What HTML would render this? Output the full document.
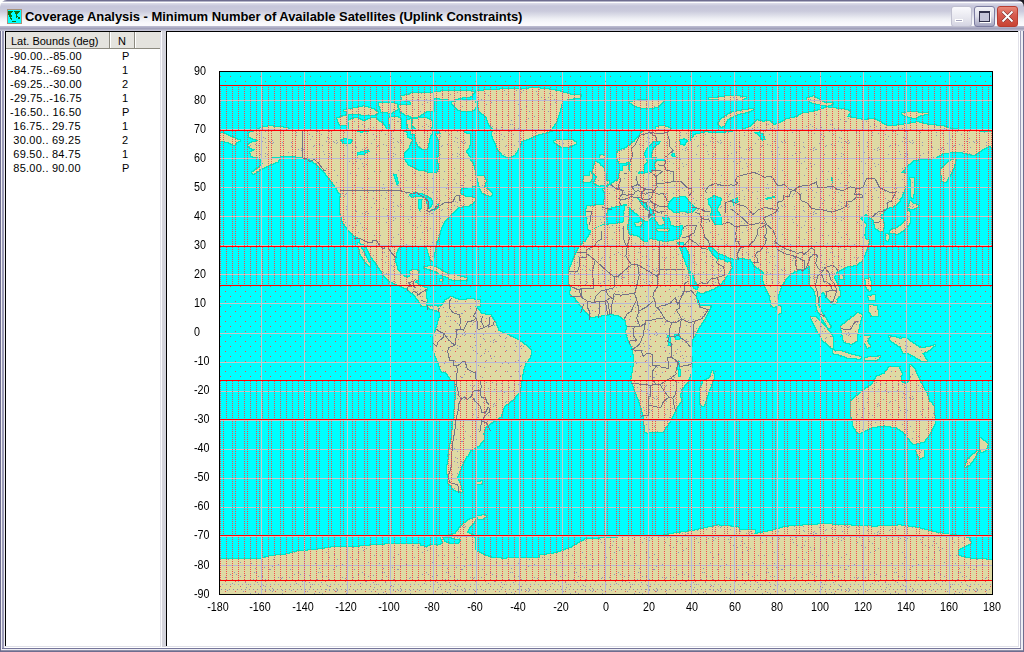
<!DOCTYPE html>
<html><head><meta charset="utf-8">
<style>
html,body{margin:0;padding:0;width:1024px;height:652px;overflow:hidden;background:#fff;}
body{position:relative;font-family:"Liberation Sans",sans-serif;}
.a{position:absolute;}
#title{position:absolute;left:0;top:0;width:1024px;height:31px;border-radius:7px 7px 0 0;
 background:linear-gradient(to bottom,#6e6d8f 0,#6e6d8f 1px,#b4b4c8 1px,#b4b4c8 2px,#fdfdfe 2px,#fdfdfe 3px,#dedeea 3px,#c6c6da 6px,#cacadc 11px,#dcdde8 15px,#eff0f5 19px,#f9f9fc 23px,#fbfbfd 26px,#c0c0d4 26px,#a8a8c0 28px,#9a9ab4 29px,#c4c4d6 30px,#c4c4d6 31px);}
#ttext{position:absolute;left:25px;top:9px;font-weight:bold;font-size:13px;line-height:16px;color:#000;white-space:nowrap;letter-spacing:-0.05px;}
#lp{position:absolute;left:6px;top:32px;width:154px;height:614px;background:#fff;}
#hdr{position:absolute;left:6px;top:32px;width:154px;height:16px;background:#e4e3de;border-bottom:1px solid #8c8a80;}
.h{position:absolute;top:2px;height:15px;font-size:11px;line-height:15px;color:#000;}
.r{position:absolute;left:6px;height:14px;font-size:11px;line-height:14px;color:#000;white-space:nowrap;letter-spacing:0.25px;}
.c1{position:absolute;left:4px;}
.c2{position:absolute;left:116px;}
.yl{position:absolute;left:193.5px;width:58px;text-align:left;font-size:12.5px;line-height:14px;color:#000;transform:scaleX(0.86);transform-origin:0 50%;}
.xl{position:absolute;top:600px;width:40px;text-align:center;font-size:12.5px;line-height:14px;color:#000;transform:scaleX(0.86);}
#map{position:absolute;left:219px;top:71px;}
#map{--land:#dedaa4;--sea:#00ffff;}
.land{fill:var(--land);}
.sea{fill:var(--sea);}
.btn{position:absolute;top:6px;width:19px;height:19px;border-radius:3px;}
</style></head><body>
<div class="a" style="left:0;top:0;width:1024px;height:652px;background:#6e6d8f"></div>
<div class="a" style="left:1px;top:31px;width:1022px;height:620px;background:#eeeef4"></div>
<div class="a" style="left:2px;top:31px;width:2px;height:617px;background:#9c9cb8"></div>
<div class="a" style="left:1020px;top:31px;width:1px;height:617px;background:#9c9cb8"></div>
<div class="a" style="left:2px;top:648px;width:1019px;height:1px;background:#76769a"></div>
<div class="a" style="left:1px;top:650px;width:1022px;height:1px;background:#9090a8"></div>
<div class="a" style="left:0;top:0;width:8px;height:8px;background:#fff"></div>
<div class="a" style="left:1016px;top:0;width:8px;height:8px;background:#1a1a22"></div>
<div id="title"></div>
<div class="a" style="left:7px;top:9px;width:13px;height:13px;background:#00ffff;border:1px solid #a89078"></div>
<svg class="a" style="left:8px;top:10px" width="13" height="13" viewBox="0 0 13 13" shape-rendering="crispEdges"><path d="M0,1h5v1h-1v1h-1v2h1v2h-1v1h1v2h-1v-1h-1v-2h-1v-2h-1z M6,1h6v1h-1v1h-1v1h-1v2h1v1h-1v1h-1v-4h-1v-2h-1z M10,7h2v2h-2z M4,11h4v1h-4z" fill="#107010"/></svg>
<div id="ttext">Coverage Analysis - Minimum Number of Available Satellites (Uplink Constraints)</div>
<div class="btn" style="left:951px;background:linear-gradient(#fafafd,#e6e6ee 60%,#d4d4e2);border:1px solid #c0c0d0"></div>
<div class="a" style="left:955px;top:19px;width:8px;height:3px;background:#a4a4bc;border:0 solid #fff;box-shadow:0 0 0 1px #fff inset"></div>
<div class="btn" style="left:974px;background:linear-gradient(#f4f4f8,#dcdce8 50%,#a4a4c0);border:1px solid #7c7ca0"></div>
<div class="a" style="left:979px;top:11px;width:9px;height:8px;border:1px solid #30304a;border-top-width:2px;background:#c4c4d8;box-shadow:1px 1px 0 #fff"></div>
<div class="btn" style="left:997px;background:linear-gradient(#e88878,#d85c50 40%,#c84434);border:1px solid #b83c30"></div>
<svg class="a" style="left:1001px;top:10px" width="13" height="13" viewBox="0 0 13 13"><path d="M1.5,1.5L11.5,11.5M11.5,1.5L1.5,11.5" stroke="#602020" stroke-width="3"/><path d="M1.5,1.5L11.5,11.5M11.5,1.5L1.5,11.5" stroke="#fff" stroke-width="2"/></svg>
<div class="a" style="left:5px;top:31px;width:1014px;height:616px;background:#e0e0e8"></div>
<div class="a" style="left:5px;top:31px;width:1013px;height:615px;background:#000"></div>
<div id="lp"></div>
<div id="hdr"><div class="h" style="left:5px">Lat. Bounds (deg)</div><div class="h" style="left:112px">N</div>
<div class="a" style="left:103px;top:0;width:1px;height:16px;background:#8c8a80"></div><div class="a" style="left:104px;top:0;width:1px;height:16px;background:#fff"></div>
<div class="a" style="left:128px;top:0;width:1px;height:16px;background:#8c8a80"></div><div class="a" style="left:129px;top:0;width:1px;height:16px;background:#fff"></div>
</div>
<div class="a" style="left:160px;top:32px;width:1px;height:614px;background:#e0e0e8"></div>
<div class="a" style="left:161px;top:31px;width:5px;height:616px;background:#d4d4dc"></div>
<div class="a" style="left:161px;top:31px;width:1px;height:616px;background:#fafafc"></div>
<div class="a" style="left:167px;top:32px;width:851px;height:614px;background:#fff"></div>
<div class="a" style="left:6px;top:646px;width:155px;height:1px;background:#e0e0e8"></div>
<div class="a" style="left:167px;top:646px;width:852px;height:1px;background:#e0e0e8"></div>
<div class="a" style="left:1018px;top:32px;width:1px;height:615px;background:#e0e0e8"></div>
<div class="a" style="left:1019px;top:31px;width:1px;height:617px;background:#fff"></div>
<div class="a" style="left:5px;top:647px;width:1015px;height:1px;background:#fff"></div>
<div class="r" style="top:49px"><span class="c1">-90.00..-85.00</span><span class="c2">P</span></div>
<div class="r" style="top:63px"><span class="c1">-84.75..-69.50</span><span class="c2">1</span></div>
<div class="r" style="top:77px"><span class="c1">-69.25..-30.00</span><span class="c2">2</span></div>
<div class="r" style="top:91px"><span class="c1">-29.75..-16.75</span><span class="c2">1</span></div>
<div class="r" style="top:105px"><span class="c1">-16.50..&nbsp;16.50</span><span class="c2">P</span></div>
<div class="r" style="top:119px"><span class="c1">&nbsp;16.75..&nbsp;29.75</span><span class="c2">1</span></div>
<div class="r" style="top:133px"><span class="c1">&nbsp;30.00..&nbsp;69.25</span><span class="c2">2</span></div>
<div class="r" style="top:147px"><span class="c1">&nbsp;69.50..&nbsp;84.75</span><span class="c2">1</span></div>
<div class="r" style="top:161px"><span class="c1">&nbsp;85.00..&nbsp;90.00</span><span class="c2">P</span></div>

<div class="yl" style="top:64.0px">90</div>
<div class="yl" style="top:93.0px">80</div>
<div class="yl" style="top:122.1px">70</div>
<div class="yl" style="top:151.1px">60</div>
<div class="yl" style="top:180.1px">50</div>
<div class="yl" style="top:209.1px">40</div>
<div class="yl" style="top:238.2px">30</div>
<div class="yl" style="top:267.2px">20</div>
<div class="yl" style="top:296.2px">10</div>
<div class="yl" style="top:325.2px">0</div>
<div class="yl" style="top:354.3px">-10</div>
<div class="yl" style="top:383.3px">-20</div>
<div class="yl" style="top:412.3px">-30</div>
<div class="yl" style="top:441.4px">-40</div>
<div class="yl" style="top:470.4px">-50</div>
<div class="yl" style="top:499.4px">-60</div>
<div class="yl" style="top:528.4px">-70</div>
<div class="yl" style="top:557.5px">-80</div>
<div class="yl" style="top:586.5px">-90</div>

<div class="xl" style="left:197.5px">-180</div>
<div class="xl" style="left:240.4px">-160</div>
<div class="xl" style="left:283.3px">-140</div>
<div class="xl" style="left:326.2px">-120</div>
<div class="xl" style="left:369.2px">-100</div>
<div class="xl" style="left:412.1px">-80</div>
<div class="xl" style="left:455.0px">-60</div>
<div class="xl" style="left:497.9px">-40</div>
<div class="xl" style="left:540.8px">-20</div>
<div class="xl" style="left:585.8px">0</div>
<div class="xl" style="left:628.7px">20</div>
<div class="xl" style="left:671.6px">40</div>
<div class="xl" style="left:714.5px">60</div>
<div class="xl" style="left:757.4px">80</div>
<div class="xl" style="left:800.3px">100</div>
<div class="xl" style="left:843.2px">120</div>
<div class="xl" style="left:886.2px">140</div>
<div class="xl" style="left:929.1px">160</div>
<div class="xl" style="left:972.0px">180</div>

<svg id="map" width="774" height="524" viewBox="219 71 774 524" shape-rendering="crispEdges">
<defs>
<pattern id="p1" patternUnits="userSpaceOnUse" x="220" y="0" width="6" height="2"><rect x="0" y="1" width="1" height="1" fill="#f84848"/></pattern>
<pattern id="p2" patternUnits="userSpaceOnUse" x="220" y="0" width="12" height="2"><rect x="0" y="1" width="1" height="1" fill="#f84848"/><rect x="3" y="1" width="1" height="1" fill="#f84848"/></pattern>
<pattern id="pP" patternUnits="userSpaceOnUse" x="220" y="0" width="10" height="10"><rect x="0" y="6" width="1" height="1" fill="#f84848"/><rect x="5" y="1" width="1" height="1" fill="#f84848"/></pattern>
<pattern id="psouth" patternUnits="userSpaceOnUse" x="218" y="0" width="4" height="10"><rect x="0" y="4" width="1" height="1" fill="#a0a0c4"/><rect x="3" y="9" width="1" height="1" fill="#8c8cac"/></pattern>
<pattern id="pdots" patternUnits="userSpaceOnUse" x="219" y="71" width="64" height="64"><path d="M41,19h1v1h-1zM50,6h1v1h-1zM9,12h1v1h-1zM46,7h1v1h-1zM27,4h1v1h-1zM11,55h1v1h-1zM53,8h1v1h-1zM30,11h1v1h-1zM54,7h1v1h-1zM15,28h1v1h-1zM7,50h1v1h-1zM6,28h1v1h-1zM5,17h1v1h-1zM37,53h1v1h-1zM18,15h1v1h-1zM39,23h1v1h-1zM13,24h1v1h-1zM47,12h1v1h-1zM8,7h1v1h-1zM26,63h1v1h-1zM54,40h1v1h-1zM59,58h1v1h-1zM46,38h1v1h-1zM31,23h1v1h-1zM31,10h1v1h-1zM38,63h1v1h-1zM43,57h1v1h-1zM36,9h1v1h-1zM15,53h1v1h-1zM21,43h1v1h-1zM19,62h1v1h-1zM53,5h1v1h-1zM9,40h1v1h-1zM43,44h1v1h-1zM63,58h1v1h-1zM8,11h1v1h-1zM34,60h1v1h-1zM8,7h1v1h-1zM39,57h1v1h-1zM36,49h1v1h-1zM44,2h1v1h-1zM59,45h1v1h-1zM21,14h1v1h-1zM63,7h1v1h-1zM27,36h1v1h-1zM16,31h1v1h-1zM50,50h1v1h-1zM63,10h1v1h-1zM21,57h1v1h-1zM51,35h1v1h-1zM17,55h1v1h-1zM35,53h1v1h-1zM45,48h1v1h-1zM29,19h1v1h-1zM10,22h1v1h-1zM19,29h1v1h-1zM29,1h1v1h-1zM62,23h1v1h-1zM33,36h1v1h-1zM0,18h1v1h-1zM53,47h1v1h-1zM40,16h1v1h-1zM6,58h1v1h-1zM50,50h1v1h-1zM51,50h1v1h-1zM13,61h1v1h-1zM51,7h1v1h-1zM24,8h1v1h-1zM26,56h1v1h-1zM20,14h1v1h-1zM43,6h1v1h-1zM13,0h1v1h-1zM19,12h1v1h-1zM46,3h1v1h-1zM9,26h1v1h-1zM48,19h1v1h-1zM32,44h1v1h-1zM46,60h1v1h-1zM15,14h1v1h-1zM62,59h1v1h-1zM61,61h1v1h-1zM39,10h1v1h-1zM18,13h1v1h-1zM43,33h1v1h-1zM61,20h1v1h-1zM2,26h1v1h-1zM46,18h1v1h-1zM3,38h1v1h-1zM11,33h1v1h-1zM46,21h1v1h-1z" fill="#9494b4"/><path d="M45,28h1v1h-1zM42,28h1v1h-1zM24,30h1v1h-1zM51,29h1v1h-1zM25,63h1v1h-1zM45,3h1v1h-1zM3,35h1v1h-1zM60,33h1v1h-1zM24,44h1v1h-1zM57,44h1v1h-1zM46,10h1v1h-1zM28,13h1v1h-1zM29,60h1v1h-1zM25,43h1v1h-1zM26,61h1v1h-1zM0,61h1v1h-1zM44,10h1v1h-1zM15,49h1v1h-1zM25,61h1v1h-1zM22,55h1v1h-1z" fill="#f0c0b0"/></pattern>
<filter id="coastf" filterUnits="userSpaceOnUse" x="219" y="71" width="774" height="524" color-interpolation-filters="sRGB">
<feColorMatrix type="luminanceToAlpha" in="SourceGraphic" result="a"/>
<feMorphology operator="dilate" radius="1" in="a" result="d"/>
<feComposite operator="out" in="d" in2="a" result="ring"/>
<feFlood flood-color="#00d6a0" result="c"/>
<feComposite operator="in" in="c" in2="ring"/>
</filter>
<mask id="lmask" maskUnits="userSpaceOnUse" x="219" y="71" width="774" height="524"><use href="#landg" style="--land:#fff;--sea:#000"/></mask>
</defs>
<g id="landg">
<rect class="sea" x="219" y="71" width="774" height="524"/>
<defs><clipPath id="c_A"><rect x="219" y="71" width="256" height="163"/></clipPath><clipPath id="c_B"><rect x="475" y="71" width="262" height="163"/></clipPath><clipPath id="c_C"><rect x="737" y="71" width="256" height="163"/></clipPath><clipPath id="c_D"><rect x="219" y="234" width="256" height="163"/></clipPath><clipPath id="c_E"><rect x="475" y="234" width="262" height="163"/></clipPath><clipPath id="c_F"><rect x="737" y="234" width="256" height="163"/></clipPath><clipPath id="c_G2"><rect x="347" y="380" width="256" height="163"/></clipPath><clipPath id="c_H2"><rect x="560" y="380" width="256" height="163"/></clipPath><clipPath id="c_AU"><rect x="780" y="340" width="213" height="135"/></clipPath><clipPath id="c_ANT1"><rect x="219" y="520" width="260" height="74"/></clipPath><clipPath id="c_ANT2"><rect x="479" y="500" width="260" height="94"/></clipPath><clipPath id="c_ANT3"><rect x="735" y="500" width="260" height="94"/></clipPath><clipPath id="c_R11"><rect x="219" y="71" width="160" height="102"/></clipPath><clipPath id="c_R12"><rect x="379" y="71" width="160" height="102"/></clipPath><clipPath id="c_HB"><rect x="379" y="120" width="120" height="76"/></clipPath><clipPath id="c_US"><rect x="299" y="173" width="160" height="102"/></clipPath><clipPath id="c_NATL"><rect x="439" y="140" width="160" height="102"/></clipPath><clipPath id="c_SCAN"><rect x="539" y="71" width="160" height="102"/></clipPath><clipPath id="c_eu"><rect x="580" y="120" width="160" height="102"/></clipPath><clipPath id="c_SIB1"><rect x="690" y="80" width="160" height="102"/></clipPath><clipPath id="c_BALT"><rect x="600" y="130" width="80" height="51"/></clipPath><clipPath id="c_SIB2"><rect x="833" y="80" width="160" height="102"/></clipPath><clipPath id="c_ME"><rect x="680" y="173" width="160" height="102"/></clipPath><clipPath id="c_med2"><rect x="580" y="190" width="120" height="60"/></clipPath><clipPath id="c_JP"><rect x="833" y="173" width="160" height="102"/></clipPath><clipPath id="c_SEA"><rect x="737" y="240" width="160" height="102"/></clipPath><clipPath id="c_NG"><rect x="833" y="300" width="160" height="102"/></clipPath><clipPath id="c_AFN"><rect x="560" y="242" width="160" height="102"/></clipPath><clipPath id="c_AFS"><rect x="600" y="330" width="160" height="102"/></clipPath><clipPath id="c_SAN"><rect x="400" y="270" width="160" height="102"/></clipPath><clipPath id="c_GRS"><rect x="470" y="100" width="120" height="76"/></clipPath><clipPath id="c_PEN"><rect x="420" y="500" width="120" height="76"/></clipPath><clipPath id="c_ARC1"><rect x="331" y="80" width="128" height="54"/></clipPath><clipPath id="c_ARC2"><rect x="411" y="80" width="128" height="54"/></clipPath><clipPath id="c_JAP"><rect x="880" y="200" width="40" height="45"/></clipPath><clipPath id="c_AK"><rect x="219" y="111" width="128" height="82"/></clipPath><clipPath id="c_BAL2"><rect x="610" y="120" width="80" height="51"/></clipPath><clipPath id="c_CAM"><rect x="360" y="230" width="120" height="76"/></clipPath><clipPath id="c_ARB"><rect x="690" y="230" width="120" height="76"/></clipPath><clipPath id="c_SAS"><rect x="420" y="380" width="120" height="76"/></clipPath></defs>
<path clip-path="url(#c_A)" class="land" d="M261.5,129.0 269.0,126.5 281.5,126.0 291.5,127.5 301.5,130.0 339.0,130.5 349.0,133.0 359.0,132.0 369.0,131.0 379.0,133.5 391.5,131.5 404.0,131.5 406.5,138.5 404.5,146.0 404.5,166.0 416.5,169.0 427.8,172.2 433.5,184.8 437.0,168.5 442.2,164.0 440.0,157.8 435.5,152.8 437.5,147.8 450.0,149.0 457.8,155.2 466.5,159.0 476.5,161.5 476.5,236.0 344.0,236.0 342.0,221.0 340.2,203.5 338.5,191.0 332.8,184.8 327.8,177.2 324.0,169.8 320.2,163.5 314.0,159.0 305.2,157.2 294.0,157.2 285.2,157.2 276.0,161.0 264.0,168.5 252.8,174.0 262.8,166.0 267.8,161.0 261.5,157.2 251.5,153.5 249.0,146.0 254.0,143.5 248.5,139.8 250.2,134.8 256.5,132.2Z"/>
<path clip-path="url(#c_A)" class="sea" d="M404.5,145.5 404.5,166.0 416.5,169.0 427.8,172.2 433.5,184.8 437.0,168.5 442.2,164.0 440.0,157.8 435.5,152.8 437.5,147.8 450.0,149.0 457.8,155.2 466.5,159.0 476.5,161.5 476.5,151.0 456.5,150.5 439.0,146.0 434.0,136.0 429.0,130.5 419.0,131.0 411.5,133.5 407.0,139.8ZM336.5,138.5 344.0,136.5 354.0,138.0 351.5,143.5 344.0,142.2 338.5,144.0ZM354.0,150.5 364.0,149.8 371.5,151.5 366.5,154.8 356.5,154.8ZM394.0,173.5 397.8,174.8 399.0,183.5 395.2,182.2ZM406.5,190.5 416.5,188.5 426.5,190.5 424.0,196.0 414.0,197.2 407.8,196.0ZM419.0,197.2 422.8,198.5 424.0,211.0 420.2,209.8ZM426.5,196.0 431.5,197.2 434.0,206.0 429.0,207.2ZM434.0,206.0 444.0,203.5 445.2,207.2 436.5,211.0Z"/>
<path clip-path="url(#c_A)" class="land" d="M414.0,118.5 429.0,116.0 444.0,118.5 459.0,123.5 476.5,126.0 476.5,150.5 456.5,150.5 444.0,148.5 436.5,143.5 431.5,136.0 419.0,131.0ZM336.5,122.2 341.5,116.0 351.5,116.0 354.0,123.5 351.5,129.0 339.0,129.0ZM355.2,119.8 369.0,116.0 381.5,117.2 391.5,118.5 394.0,129.8 355.2,129.8ZM349.0,111.0 359.0,107.2 374.0,108.5 379.0,114.8 369.0,115.5 351.5,115.5ZM376.5,108.5 394.0,102.2 409.0,103.5 404.0,113.5 389.0,114.8 379.0,114.0ZM399.0,96.0 419.0,92.2 444.0,92.2 476.5,93.0 476.5,108.5 456.5,106.0 439.0,108.5 419.0,106.0 406.5,103.5ZM409.0,116.0 424.0,113.5 436.5,116.0 434.0,122.2 414.0,123.5ZM394.0,119.8 409.0,119.8 411.5,129.8 394.0,129.8ZM219.0,132.2 229.0,134.8 239.0,138.5 234.0,143.5 224.0,142.2 219.0,141.0Z"/>
<path clip-path="url(#c_B)" class="land" d="M467.5,93.5 485.0,91.0 505.0,89.8 525.0,89.0 550.0,89.8 560.0,92.2 580.0,94.8 575.0,98.5 562.5,98.5 565.0,111.0 560.0,121.0 555.0,128.5 540.0,133.5 525.0,138.5 515.0,153.5 512.5,157.2 507.5,156.0 497.5,143.5 490.0,133.5 492.5,129.8 485.0,123.5 477.5,116.0 467.5,108.5ZM618.8,157.2 625.0,148.5 632.5,142.2 640.0,133.5 650.0,130.5 665.0,129.0 675.0,132.2 687.5,134.8 700.0,133.5 740.0,131.0 740.0,236.0 592.5,236.0 588.8,226.0 587.5,211.0 595.0,207.2 607.5,206.0 605.0,196.0 600.0,191.0 610.0,188.5 617.5,181.0 625.0,178.5 630.0,172.2 625.0,166.0 622.5,161.0ZM472.5,168.5 480.0,171.0 485.0,178.5 482.5,186.0 472.5,188.5Z"/>
<path clip-path="url(#c_B)" class="sea" d="M680.0,136.0 695.0,137.2 692.5,146.0 682.5,143.5ZM627.5,176.0 635.0,171.0 642.5,163.5 647.5,153.5 650.0,143.5 657.5,141.0 655.0,156.0 667.5,157.2 655.0,161.0 650.0,171.0 645.0,178.5 635.0,181.0ZM667.5,201.0 680.0,197.2 690.0,198.5 695.0,206.0 685.0,211.0 672.5,209.8ZM705.0,198.5 715.0,196.0 725.0,201.0 720.0,216.0 725.0,231.0 712.5,236.0 707.5,221.0Z"/>
<path clip-path="url(#c_B)" class="land" d="M553.8,142.2 560.0,138.5 570.0,139.0 577.5,142.2 573.8,146.0 562.5,147.2 555.0,146.0ZM630.0,102.2 640.0,99.8 650.0,102.2 660.0,103.5 655.0,108.5 640.0,108.5ZM705.0,96.0 720.0,94.8 732.5,96.0 732.5,101.0 712.5,101.0ZM717.5,121.0 732.5,114.8 732.5,129.8 722.5,129.8ZM482.5,188.5 490.0,187.2 493.8,196.0 485.0,196.0ZM592.5,164.8 597.5,162.2 602.5,171.0 607.5,181.0 602.5,186.0 595.0,184.8 590.0,176.0ZM585.0,173.5 592.5,172.2 592.5,181.0 586.2,182.2Z"/>
<path clip-path="url(#c_C)" class="land" d="M734.5,129.0 752.0,122.2 762.0,124.8 777.0,123.5 787.0,117.2 797.0,113.5 812.0,111.0 822.0,108.5 847.0,111.0 852.0,119.8 867.0,119.8 877.0,121.0 892.0,124.8 907.0,123.5 922.0,123.5 937.0,124.8 949.5,127.2 962.0,131.0 977.0,133.5 987.0,138.5 994.5,142.2 994.5,151.0 977.0,153.5 962.0,154.8 957.0,161.0 954.5,171.0 942.0,183.5 938.2,171.0 943.2,161.0 934.5,158.5 917.0,158.5 909.5,168.5 899.5,173.5 900.8,188.5 894.5,196.0 887.0,211.0 879.5,218.5 887.0,231.0 887.0,236.0 877.0,236.0 872.0,221.0 867.0,216.0 859.5,213.5 859.5,236.0 734.5,236.0Z"/>
<path clip-path="url(#c_C)" class="sea" d="M837.0,173.5 840.0,174.8 834.5,182.2 829.5,183.0ZM764.5,197.2 774.5,195.5 774.5,198.0 765.8,199.0Z"/>
<path clip-path="url(#c_C)" class="land" d="M909.5,176.0 914.5,174.8 917.0,191.0 914.5,208.5 910.8,207.2 912.0,191.0ZM909.5,218.5 917.0,216.0 922.0,223.5 912.0,228.5ZM897.0,234.0 912.0,228.5 909.5,236.0 897.0,236.0ZM902.0,112.2 912.0,111.0 929.5,113.5 922.0,116.0 907.0,116.0ZM804.5,98.5 814.5,96.0 822.0,103.5 812.0,104.8ZM734.5,113.5 742.0,109.8 754.5,109.8 747.0,113.5Z"/>
<path clip-path="url(#c_D)" class="land" d="M354.0,231.5 436.5,231.5 434.0,245.2 429.0,246.5 424.0,244.0 414.0,245.2 401.5,246.5 396.5,251.5 399.0,266.5 404.0,274.0 411.5,271.5 416.5,266.5 419.0,275.2 415.2,280.2 424.0,284.0 426.5,291.5 434.0,299.0 439.0,305.2 434.0,307.8 426.5,302.8 419.0,294.0 409.0,289.0 399.0,284.0 389.0,279.0 381.5,266.5 376.5,254.0 374.0,246.5 364.0,234.0ZM355.2,236.5 364.0,244.0 369.0,257.8 372.0,266.0 367.8,265.2 362.8,254.0 357.8,244.0ZM444.0,299.5 454.0,297.8 476.5,297.8 476.5,399.0 456.5,399.0 454.0,384.0 444.0,369.0 439.0,359.0 432.8,345.2 434.0,334.0 439.0,321.5 436.5,309.0Z"/>
<path clip-path="url(#c_D)" class="land" d="M424.0,266.5 434.0,265.2 444.0,271.5 454.0,276.5 449.0,277.8 436.5,272.8 426.5,270.2ZM454.0,276.5 464.0,275.2 466.5,279.0 456.5,280.2Z"/>
<path clip-path="url(#c_E)" class="land" d="M586.2,231.5 680.0,231.5 682.5,249.0 690.0,266.5 695.0,282.8 701.2,290.2 712.5,292.8 716.2,290.2 711.2,309.0 701.2,324.0 695.0,334.0 690.5,349.0 692.5,364.0 690.0,379.0 682.5,394.0 680.0,399.0 637.5,399.0 636.2,384.0 635.0,369.0 632.5,351.5 630.0,339.0 627.5,326.5 625.0,319.0 620.0,315.2 605.0,314.0 590.0,317.8 582.5,311.5 575.0,304.0 571.2,294.0 568.8,284.0 570.0,269.0 575.0,254.0 580.0,244.0ZM687.0,231.5 740.0,231.5 740.0,271.5 715.0,281.0 705.0,282.8 700.0,274.0 693.8,259.0 688.8,244.0ZM472.5,306.5 480.0,309.0 490.0,316.5 497.5,329.0 512.5,336.5 525.0,344.0 531.2,351.5 527.5,364.0 522.5,374.0 520.0,389.0 517.5,399.0 472.5,399.0Z"/>
<path clip-path="url(#c_E)" class="sea" d="M672.5,334.0 680.0,333.5 679.5,339.0 673.0,339.5Z"/>
<path clip-path="url(#c_E)" class="land" d="M705.0,376.5 712.5,374.0 715.0,384.0 710.0,399.0 700.0,399.0 701.2,386.5Z"/>
<path clip-path="url(#c_F)" class="land" d="M734.5,231.5 867.0,231.5 864.5,249.0 862.0,261.5 852.0,269.0 842.0,274.0 843.2,284.0 837.0,299.0 832.0,301.5 829.5,289.0 824.5,286.5 820.8,299.0 824.5,314.0 818.2,315.2 814.5,301.5 813.2,286.5 809.5,274.0 804.5,262.8 797.0,269.0 787.0,275.2 780.8,289.0 775.8,306.5 772.0,306.5 767.0,291.5 762.0,274.0 754.5,264.0 749.5,251.5 742.0,249.0 734.5,251.5Z"/>
<path clip-path="url(#c_F)" class="land" d="M777.0,306.5 780.8,305.2 782.0,314.0 778.2,315.2ZM839.5,274.0 844.5,272.8 844.5,277.8 839.5,277.8ZM863.2,264.0 865.8,261.5 867.0,270.2 864.0,271.5ZM809.5,316.5 814.5,317.8 824.5,326.5 834.5,344.0 832.0,349.0 822.0,339.0 814.5,329.0ZM834.5,349.0 849.5,351.5 862.0,356.5 859.5,359.0 842.0,356.5 833.2,352.8ZM842.0,321.5 849.5,316.5 859.5,314.0 862.0,321.5 857.0,331.5 854.5,341.5 844.5,341.5 839.5,334.0ZM864.5,329.0 872.0,329.0 869.5,339.0 874.5,344.0 867.0,346.5 864.5,339.0ZM864.5,289.0 872.0,291.5 874.5,304.0 877.0,316.5 872.0,317.8 867.0,309.0 865.8,299.0ZM887.0,334.0 897.0,336.5 907.0,339.0 917.0,344.0 927.0,351.5 924.5,361.5 912.0,354.0 902.0,351.5 892.0,344.0 888.2,339.0ZM862.0,356.5 882.0,354.0 882.0,357.8 862.0,359.0ZM872.0,379.0 887.0,369.0 899.5,369.0 907.0,374.0 912.0,364.0 917.0,374.0 922.0,389.0 924.5,399.0 862.0,399.0 867.0,384.0ZM882.0,234.0 897.0,231.5 892.0,241.5 885.8,241.5Z"/>
<path clip-path="url(#c_G2)" class="land" d="M453.2,377.5 523.2,377.5 519.5,390.0 509.5,400.0 502.0,412.5 492.0,422.5 487.0,430.0 483.2,440.0 477.0,445.0 472.0,451.2 467.0,455.0 462.0,465.0 457.0,477.5 460.8,486.2 462.0,492.0 454.5,490.0 448.2,482.5 447.0,467.5 449.5,455.0 452.0,440.0 454.5,420.0 457.0,395.0Z"/>
<path clip-path="url(#c_G2)" class="land" d="M452.0,535.0 464.5,527.5 474.5,520.0 487.0,516.2 477.0,525.0 472.0,535.0 477.0,545.0 452.0,545.0ZM477.0,482.5 482.0,481.2 482.0,483.8 477.5,484.5Z"/>
<path clip-path="url(#c_H2)" class="land" d="M631.2,377.5 690.0,377.5 685.0,390.0 682.5,400.0 675.0,405.0 672.5,412.5 667.5,422.5 660.0,430.0 647.5,432.5 645.0,425.0 640.0,412.5 637.5,397.5 632.5,385.0Z"/>
<path clip-path="url(#c_H2)" class="land" d="M702.5,377.5 712.5,377.5 710.0,390.0 705.0,405.0 700.0,405.0 698.8,395.0 701.2,385.0Z"/>
<path clip-path="url(#c_AU)" class="land" d="M869.4,381.6 875.7,377.4 884.0,369.1 892.3,367.0 899.6,369.1 900.6,379.5 904.8,380.6 910.0,379.5 911.0,365.0 917.3,381.6 925.6,394.1 933.9,406.6 935.0,423.2 929.8,433.6 923.5,441.9 913.1,444.0 906.9,435.7 902.7,431.5 896.5,427.4 884.0,425.3 871.5,427.4 859.0,433.6 853.8,427.4 850.7,412.8 850.7,398.2 857.0,392.0 867.4,385.8Z"/>
<path clip-path="url(#c_AU)" class="land" d="M916.2,450.2 923.5,450.2 923.5,456.5 919.4,458.6ZM979.7,437.8 988.0,444.0 985.9,450.2 980.7,452.3ZM977.6,451.3 975.5,456.5 969.3,464.8 965.1,466.9 967.2,460.6 973.4,454.4ZM892.3,340.0 904.8,340.0 913.1,346.2 923.5,358.7 925.6,360.8 917.3,360.8 904.8,356.6 898.6,350.4 894.4,346.2Z"/>
<path clip-path="url(#c_ANT1)" class="land" d="M216.5,559.4 259.6,559.4 269.8,556.1 287.6,554.3 295.2,551.7 307.9,550.5 320.6,549.2 335.8,546.7 351.0,547.4 371.3,545.4 391.7,544.1 409.4,544.1 434.8,542.9 447.5,537.8 457.7,535.2 462.8,530.2 472.9,522.5 480.5,520.0 480.5,596.2 216.5,596.2Z"/>
<path clip-path="url(#c_ANT2)" class="land" d="M471.4,515.2 481.5,516.5 479.0,552.1 504.4,557.1 529.8,557.1 555.2,553.3 570.4,548.2 585.6,539.4 606.0,538.1 631.3,536.8 656.7,536.8 677.0,533.0 694.8,530.5 717.7,525.4 732.9,526.7 740.5,527.9 740.5,601.6 471.4,601.6Z"/>
<path clip-path="url(#c_ANT3)" class="land" d="M727.4,529.2 755.3,530.0 754.0,534.3 773.1,530.5 785.8,526.7 823.9,524.1 849.3,525.4 874.6,526.7 900.0,525.4 917.8,527.9 938.1,533.0 955.9,535.5 968.6,538.1 971.1,543.2 958.4,549.5 958.4,555.9 968.6,558.4 988.9,559.7 996.5,559.7 996.5,601.6 727.4,601.6Z"/>
<rect class="sea" x="219" y="71" width="160" height="102"/>
<path clip-path="url(#c_R11)" class="land" d="M262.0,130.1 265.9,127.6 272.2,126.1 280.0,127.0 287.8,128.1 292.5,129.7 306.6,130.4 312.9,131.2 320.7,130.8 328.5,130.4 337.9,131.2 380.1,131.2 380.1,174.3 326.9,174.3 320.7,168.0 312.9,161.0 304.3,156.3 297.2,156.7 291.0,155.5 284.7,155.5 278.4,158.6 272.2,161.7 267.5,166.4 262.8,171.1 259.7,174.3 256.5,174.3 258.1,168.0 264.4,163.3 259.7,160.2 251.9,156.3 251.1,152.3 258.1,150.0 252.6,147.7 250.3,143.0 257.3,139.8 251.1,136.7 248.7,133.6 255.8,132.0ZM219.0,132.8 226.8,133.6 234.6,137.5 240.1,139.8 236.2,142.2 233.1,145.3 228.4,142.2 222.1,141.4 217.4,140.6Z"/>
<path clip-path="url(#c_R11)" class="sea" d="M337.9,139.8 344.2,138.3 353.5,139.8 350.4,144.5 342.6,143.7ZM356.7,152.3 366.1,150.0 370.7,150.8 364.5,154.7 357.5,155.5Z"/>
<path clip-path="url(#c_R11)" class="land" d="M337.9,117.9 344.2,115.6 348.8,116.4 348.8,124.2 346.5,128.9 339.5,127.3 337.1,122.6ZM352.0,119.5 359.8,116.4 369.2,114.8 380.1,113.2 380.1,129.7 359.8,129.2 352.0,126.5ZM359.8,105.4 369.2,103.9 370.7,107.8 362.9,108.5ZM369.2,109.3 380.1,107.8 380.1,112.0 372.3,112.5Z"/>
<rect class="sea" x="379" y="71" width="160" height="102"/>
<path clip-path="url(#c_R12)" class="land" d="M377.4,131.2 405.6,131.2 410.3,136.7 408.7,144.5 405.6,152.3 404.0,158.6 405.6,174.3 377.4,174.3ZM410.3,131.2 430.6,131.2 435.3,133.6 444.7,132.0 460.3,133.6 472.9,136.7 474.4,144.5 465.0,152.3 449.4,150.8 441.6,152.3 430.6,144.5 418.1,139.8ZM430.6,158.6 441.6,155.5 457.2,158.6 472.9,161.7 476.0,174.3 430.6,174.3Z"/>
<path clip-path="url(#c_R12)" class="land" d="M402.5,94.5 418.1,92.9 430.6,91.3 444.7,91.0 463.5,91.3 474.4,92.9 472.9,100.7 466.6,103.9 460.3,107.0 452.5,105.4 451.0,102.3 438.4,103.1 425.9,102.3 413.4,103.1 402.5,99.9ZM476.0,92.9 488.5,89.8 508.8,89.0 540.1,88.2 540.1,174.3 516.7,174.3 515.1,155.5 508.8,156.3 501.0,149.2 494.8,141.4 491.6,133.6 491.6,130.1 490.1,124.2 485.4,117.9 480.7,111.7 476.0,107.0 479.1,100.7ZM379.0,103.9 397.8,102.3 410.3,104.6 410.3,109.3 397.8,110.1 377.4,110.1ZM415.0,104.6 430.6,104.6 444.7,106.2 443.1,111.7 430.6,113.2 416.5,111.7ZM377.4,114.8 388.4,113.2 397.8,116.4 399.3,124.2 388.4,128.9 377.4,128.9ZM402.5,116.4 418.1,115.6 429.1,117.9 425.9,124.2 415.0,128.9 404.0,127.3ZM430.6,117.9 444.7,117.9 451.0,124.2 446.3,129.7 433.8,129.7Z"/>
<rect class="sea" x="379" y="120" width="120" height="76"/>
<path clip-path="url(#c_HB)" class="land" d="M377.8,131.7 406.0,132.3 407.1,137.6 411.8,139.9 408.3,148.1 403.6,152.8 403.6,158.7 408.3,165.7 417.7,170.4 425.9,171.6 431.7,176.2 434.1,182.1 435.8,183.3 436.4,173.9 439.9,166.9 437.6,159.8 439.9,152.8 444.6,151.1 451.7,149.9 461.0,154.6 468.1,158.7 472.8,162.2 476.3,169.2 482.1,173.9 489.2,180.9 499.7,183.3 499.7,197.3 377.8,197.3ZM377.8,118.8 387.2,118.8 387.2,129.4 377.8,130.0ZM390.7,123.5 406.0,122.3 407.1,129.4 390.7,129.4ZM411.8,118.8 432.9,118.8 431.7,128.2 413.0,129.4ZM437.6,118.8 455.2,118.8 454.0,127.0 439.9,127.0ZM484.5,118.8 499.7,118.8 499.7,125.9 486.8,125.9Z"/>
<path clip-path="url(#c_HB)" class="sea" d="M393.1,175.1 395.4,174.5 398.9,183.3 397.8,185.6Z"/>
<path clip-path="url(#c_HB)" class="land" d="M414.2,131.7 431.7,131.7 429.4,138.8 427.0,149.3 420.0,148.1 416.5,142.3ZM435.2,131.1 470.4,131.1 471.6,141.1 463.4,147.0 454.0,144.6 444.6,147.0 439.9,143.4 437.6,137.6ZM490.3,131.7 499.7,130.5 499.7,150.5 495.0,149.3 491.5,141.1Z"/>
<rect class="sea" x="299" y="173" width="160" height="102"/>
<path clip-path="url(#c_US)" class="land" d="M319.3,171.4 460.1,171.4 460.1,190.2 453.9,193.3 453.9,209.0 447.6,216.8 442.9,224.6 439.8,232.4 436.7,240.3 433.9,245.7 433.5,254.3 433.9,261.4 431.2,262.2 428.8,255.9 428.1,248.1 424.2,245.7 414.8,244.2 406.9,244.7 399.1,245.3 394.4,247.3 392.9,254.3 394.4,263.7 399.1,273.1 400.7,276.3 380.3,276.3 377.2,263.7 374.1,254.3 370.2,245.7 364.7,240.3 353.8,235.6 349.1,230.9 342.8,221.5 340.0,212.1 340.0,201.2 341.2,191.0 335.8,188.6 330.3,182.4 324.8,176.9ZM358.1,242.6 361.6,245.7 366.3,254.3 371.0,264.5 369.4,266.1 364.7,258.3 360.8,251.2 357.7,245.0Z"/>
<path clip-path="url(#c_US)" class="sea" d="M408.5,194.9 414.8,191.8 422.6,193.3 428.8,196.5 424.2,198.0 417.9,196.5 411.6,198.0ZM417.9,199.6 422.6,198.8 421.8,209.0 418.7,211.3ZM425.7,196.5 432.0,198.0 433.5,204.3 428.8,209.8 426.5,204.3ZM430.4,209.8 439.8,205.1 442.9,205.9 433.5,211.3ZM436.7,204.3 442.9,201.9 446.1,203.5 439.8,206.2ZM392.9,174.6 396.8,173.8 399.1,184.0 396.8,185.5Z"/>
<path clip-path="url(#c_US)" class="land" d="M424.2,266.1 433.5,265.3 442.9,268.4 455.4,273.1 460.1,275.0 447.6,276.3 436.7,270.8 425.7,268.7Z"/>
<rect class="sea" x="439" y="140" width="160" height="102"/>
<path clip-path="url(#c_NATL)" class="land" d="M437.4,138.4 471.9,138.4 468.7,147.8 465.6,151.0 470.3,158.8 475.0,168.2 476.5,177.5 475.8,185.4 470.3,186.9 460.9,188.5 459.3,193.2 464.0,196.3 475.0,197.9 475.0,201.0 468.7,205.7 457.8,207.3 451.5,213.5 445.3,219.8 441.3,227.6 439.0,235.4 437.4,243.3Z"/>
<path clip-path="url(#c_NATL)" class="land" d="M476.5,172.9 482.8,174.4 485.9,180.7 484.4,186.9 492.2,193.2 490.6,196.3 482.8,193.2 479.7,186.9 478.1,180.7ZM492.2,138.4 520.3,138.4 517.2,146.3 514.1,155.6 511.0,157.2 504.7,152.5 498.4,147.8ZM553.2,141.6 561.0,139.2 576.7,139.2 575.1,144.7 567.3,147.0 557.9,146.3ZM582.9,176.0 589.2,171.3 593.9,172.9 593.1,180.7 584.5,182.2ZM593.9,161.9 600.1,160.3 600.1,191.6 595.4,190.1ZM586.8,205.7 600.1,204.1 600.1,243.3 586.1,243.3 589.2,227.6 587.6,215.1Z"/>
<rect class="sea" x="539" y="71" width="160" height="102"/>
<path clip-path="url(#c_SCAN)" class="land" d="M537.4,88.2 551.5,89.8 559.3,91.3 570.3,94.5 581.2,95.2 579.7,97.6 567.2,99.2 562.5,103.9 564.0,111.7 559.3,117.9 557.8,125.8 551.5,130.4 537.4,133.6ZM623.5,174.3 617.2,160.2 617.2,152.3 626.6,144.5 636.0,135.1 642.3,131.2 651.6,130.1 657.9,127.3 664.2,126.5 670.4,128.1 679.8,130.4 692.3,133.6 700.1,136.7 700.1,174.3Z"/>
<path clip-path="url(#c_SCAN)" class="sea" d="M652.4,140.6 660.2,140.6 658.7,147.7 651.6,155.5 648.5,164.9 646.9,174.3 640.7,174.3 643.8,163.3 648.5,152.3ZM678.2,138.3 689.2,136.7 693.9,141.4 689.2,146.1 682.9,144.5ZM670.4,153.9 675.1,152.3 676.7,157.0 672.0,158.6Z"/>
<path clip-path="url(#c_SCAN)" class="land" d="M553.9,142.2 559.3,139.8 570.3,139.8 576.5,143.0 573.4,146.9 562.5,147.7 556.2,146.1ZM629.7,102.3 640.7,99.9 648.5,100.7 662.6,101.5 657.9,107.0 645.4,108.5 636.0,106.2ZM592.2,161.0 601.6,160.2 604.7,164.9 603.1,174.3 590.6,174.3 593.8,168.0Z"/>
<rect class="sea" x="580" y="120" width="160" height="102"/>
<path clip-path="url(#c_eu)" class="land" d="M620.7,163.8 616.8,153.6 623.8,148.5 630.1,143.5 636.3,135.6 642.6,131.7 653.5,129.4 667.6,129.7 741.1,129.7 741.1,223.3 586.3,223.3 586.3,205.3 603.5,204.5 603.5,195.1 597.2,192.0 605.0,188.8 611.3,184.1 617.5,180.2 623.8,177.9 625.4,171.6 626.9,167.7Z"/>
<path clip-path="url(#c_eu)" class="sea" d="M630.1,173.2 636.3,170.1 641.0,165.4 644.1,159.1 645.7,149.7 648.8,143.5 655.1,138.8 661.3,140.3 658.2,145.0 653.5,151.3 652.0,159.1 655.1,163.8 662.9,160.7 667.6,157.5 664.5,162.2 658.2,166.9 652.0,171.6 645.7,173.2 639.4,174.8 631.6,175.5ZM678.6,138.8 686.4,135.6 692.6,137.2 689.5,145.0 683.3,146.6 680.1,143.5ZM692.6,130.3 713.0,130.3 711.4,135.6 698.9,137.2ZM667.6,198.2 675.4,196.7 683.3,195.1 689.5,196.7 689.5,204.5 686.4,210.7 677.0,212.3 669.2,209.2 666.8,202.9ZM706.7,196.7 714.5,195.1 720.8,198.2 717.7,207.6 719.2,217.0 723.9,223.3 714.5,223.3 709.8,213.9 711.4,204.5Z"/>
<path clip-path="url(#c_eu)" class="land" d="M595.6,162.2 600.3,163.8 603.5,171.6 608.2,179.4 609.7,184.1 598.8,185.7 594.1,182.6 597.2,176.3 592.5,171.6ZM584.7,173.2 591.0,171.6 592.5,177.9 589.4,182.6 583.1,181.8ZM717.7,123.1 727.1,120.0 741.1,118.4 741.1,126.3 728.6,127.8Z"/>
<rect class="sea" x="690" y="80" width="160" height="102"/>
<path clip-path="url(#c_SIB1)" class="land" d="M688.4,144.1 694.7,134.8 705.6,132.4 721.3,133.2 732.2,131.6 741.6,130.1 751.0,126.9 757.3,120.4 763.5,121.9 768.2,120.4 774.5,125.4 782.3,121.9 787.0,119.1 796.4,117.2 802.6,113.6 815.2,111.3 827.7,107.4 838.6,108.9 851.1,111.3 851.1,183.3 688.4,183.3Z"/>
<path clip-path="url(#c_SIB1)" class="sea" d="M754.1,132.4 759.6,131.3 763.5,134.0 765.9,139.4 762.0,140.7 758.8,136.3Z"/>
<path clip-path="url(#c_SIB1)" class="land" d="M718.2,123.8 721.3,119.1 730.7,112.9 741.6,110.5 754.1,108.9 749.4,111.3 736.9,114.4 727.5,119.1 724.4,125.4 721.3,126.9ZM705.6,98.8 715.0,98.0 730.7,95.6 746.3,97.2 741.6,99.6 721.3,99.6ZM805.8,98.8 813.6,96.4 819.8,100.3 824.5,102.7 833.9,103.5 827.7,105.8 812.0,102.7Z"/>
<rect class="sea" x="600" y="130" width="80" height="51"/>
<path clip-path="url(#c_BALT)" class="land" d="M617.2,153.5 620.3,149.9 628.2,147.6 632.9,141.7 639.1,133.1 642.2,129.2 680.6,129.2 680.6,181.6 618.0,181.6 619.6,173.8 620.3,166.8 626.6,166.0 630.5,164.4 625.8,162.9 618.8,162.1Z"/>
<path clip-path="url(#c_BALT)" class="sea" d="M651.6,141.3 660.2,141.7 656.3,145.6 650.8,148.8 646.9,155.8 650.8,155.8 654.8,158.2 661.0,157.0 667.3,157.0 666.5,159.7 657.9,160.1 654.8,162.1 657.9,166.8 654.8,170.7 649.3,172.2 643.8,173.8 637.5,173.8 640.7,169.1 643.8,164.4 643.0,159.7 644.6,150.3 647.7,144.9Z"/>
<path clip-path="url(#c_BALT)" class="land" d="M599.2,155.0 604.7,155.8 603.9,158.9 599.2,158.9ZM599.2,165.2 603.1,166.8 605.5,173.8 606.3,178.5 604.7,181.6 599.2,181.6Z"/>
<rect class="sea" x="833" y="80" width="160" height="102"/>
<path clip-path="url(#c_SIB2)" class="land" d="M831.4,108.2 842.4,108.9 850.2,111.3 847.1,116.8 862.7,119.9 873.7,119.1 879.9,122.2 887.8,126.2 898.7,125.4 908.1,123.8 917.5,122.2 926.9,124.6 942.5,126.2 950.3,128.5 966.0,130.8 981.6,131.6 994.1,131.6 994.1,148.8 989.4,145.7 983.2,148.8 973.8,155.1 961.3,152.0 951.9,152.0 942.5,153.5 934.7,158.2 923.7,159.0 914.3,159.8 906.5,166.0 900.3,173.9 897.1,183.3 831.4,183.3Z"/>
<path clip-path="url(#c_SIB2)" class="sea" d="M833.0,175.4 839.3,173.9 837.7,180.1 833.0,182.0Z"/>
<path clip-path="url(#c_SIB2)" class="land" d="M940.9,169.2 948.8,161.3 955.8,159.0 953.5,167.6 948.8,177.0 945.6,183.3 940.9,183.3ZM900.3,112.9 914.3,112.1 928.4,113.6 920.6,115.2 914.3,118.3 906.5,116.0Z"/>
<rect class="sea" x="680" y="173" width="160" height="102"/>
<path clip-path="url(#c_ME)" class="land" d="M678.4,171.4 841.1,171.4 841.1,276.3 678.4,276.3Z"/>
<path clip-path="url(#c_ME)" class="sea" d="M707.4,198.8 714.4,194.9 722.2,198.0 720.7,204.3 717.5,209.0 722.2,216.8 722.2,224.6 714.4,224.6 709.7,216.8 711.3,209.0 708.2,204.3ZM731.6,199.6 737.9,196.5 738.7,201.9 733.2,205.9ZM678.4,196.5 686.3,195.7 694.1,207.4 689.4,212.1 678.4,212.1ZM764.5,198.0 775.4,195.7 774.6,198.0 766.0,199.9ZM678.4,224.6 683.1,226.2 682.3,235.6 678.4,235.6ZM678.4,246.5 683.1,251.2 687.8,266.9 689.4,276.3 678.4,276.3ZM709.7,248.1 714.4,249.7 720.7,255.9 726.9,259.0 731.6,263.7 726.9,266.9 719.1,262.2 712.9,255.9ZM731.6,262.2 736.3,259.0 748.8,258.3 755.1,262.2 758.2,266.9 762.9,273.1 764.5,276.3 731.6,276.3ZM792.6,270.0 803.6,266.9 805.2,276.3 792.6,276.3ZM834.9,271.6 841.1,268.4 841.1,276.3 834.9,276.3ZM830.2,177.7 841.1,174.6 841.1,182.4 832.5,183.2Z"/>
<rect class="sea" x="580" y="190" width="120" height="60"/>
<path clip-path="url(#c_med2)" class="land" d="M578.8,188.8 700.7,188.8 700.7,267.3 578.8,267.3Z"/>
<path clip-path="url(#c_med2)" class="sea" d="M578.8,188.8 603.4,188.8 605.8,194.7 603.4,205.2 587.0,205.8 585.9,213.4 588.2,228.7 591.7,231.0 587.0,239.2 583.5,247.4 578.8,248.6ZM592.9,229.8 601.1,225.7 608.1,224.6 618.7,223.4 626.9,223.4 626.9,228.7 629.2,234.5 638.6,236.9 645.6,243.9 650.3,239.2 662.0,241.6 669.1,241.6 679.6,239.2 682.0,234.5 683.1,225.2 676.1,225.7 671.4,225.2 670.2,219.3 666.7,214.6 662.0,217.0 664.4,224.0 659.7,225.2 655.0,219.3 655.0,213.4 652.7,209.9 645.6,202.9 636.2,197.0 632.7,199.4 629.2,202.9 619.8,205.2 610.5,207.6 607.0,209.9 605.2,220.5 603.4,224.0 595.2,227.5ZM666.7,207.6 669.1,201.7 673.8,197.0 685.5,195.9 692.5,204.1 697.2,208.8 692.5,212.9 683.1,212.3 673.8,212.9Z"/>
<path clip-path="url(#c_med2)" class="land" d="M631.6,198.2 636.2,197.0 640.9,204.1 648.0,211.1 651.5,217.0 648.0,220.5 644.5,220.5 640.9,217.0 635.1,212.3 629.2,206.4 626.9,204.1ZM635.1,222.8 642.1,222.2 640.9,226.3 636.2,225.7ZM625.1,205.8 628.6,205.2 629.2,213.4 628.0,224.0 623.4,224.0 623.9,215.8ZM657.3,229.3 669.1,228.7 667.9,230.8 658.5,231.0Z"/>
<rect class="sea" x="833" y="173" width="160" height="102"/>
<path clip-path="url(#c_JP)" class="land" d="M831.4,171.4 906.5,171.4 905.7,185.5 901.8,196.5 895.6,204.3 884.6,210.5 881.5,216.8 883.1,224.6 879.9,230.9 875.2,227.8 873.7,219.9 869.0,216.8 865.9,213.7 860.4,218.4 865.9,224.6 864.3,235.6 866.6,241.8 865.9,251.2 861.2,260.6 851.8,266.9 844.0,271.6 831.4,273.1Z"/>
<path clip-path="url(#c_JP)" class="land" d="M909.7,201.2 914.3,199.6 919.0,205.9 912.8,209.0 908.1,207.4ZM908.1,212.1 910.4,213.7 908.1,223.1 900.3,229.3 892.4,234.0 886.2,238.7 887.8,241.8 894.0,235.6 901.8,230.9 906.5,226.2ZM910.4,177.7 913.6,178.5 914.3,188.6 912.8,198.0 911.2,196.5 911.2,187.1ZM940.9,171.4 951.9,171.4 945.6,182.4 942.5,180.8ZM864.3,260.6 866.6,259.8 867.4,268.4 865.1,269.2Z"/>
<rect class="sea" x="737" y="240" width="160" height="102"/>
<path clip-path="url(#c_SEA)" class="land" d="M735.4,238.4 870.0,238.4 866.8,249.4 862.2,260.3 855.9,265.0 846.5,266.6 837.1,271.3 834.0,277.5 838.7,286.9 840.3,294.8 834.0,302.6 830.9,301.0 826.2,296.3 823.8,291.6 819.9,293.2 818.3,305.7 822.3,313.5 830.9,326.8 828.5,328.4 822.3,318.2 816.8,308.8 815.2,291.6 810.5,285.4 809.0,277.5 805.8,271.3 802.7,265.0 799.6,267.4 793.3,271.3 788.6,276.0 783.9,280.7 780.8,286.9 778.5,297.9 776.1,305.7 773.0,307.3 769.9,299.4 766.7,290.1 764.4,282.2 762.0,276.0 755.8,269.7 752.6,263.5 746.4,258.8 741.7,257.2 735.4,258.8Z"/>
<path clip-path="url(#c_SEA)" class="land" d="M776.9,305.7 780.0,304.1 781.6,312.0 778.5,313.5ZM810.5,316.7 815.2,316.7 824.6,326.0 830.9,333.9 835.6,343.3 824.6,343.3 818.3,332.3 813.7,322.9ZM843.4,327.6 849.6,321.3 855.9,318.2 860.6,312.0 862.2,318.2 859.0,327.6 859.0,343.3 840.3,343.3 840.3,333.9ZM870.0,308.8 876.2,305.7 877.8,315.1 873.1,318.2ZM865.3,279.1 870.0,278.3 871.5,286.9 870.0,291.6 866.8,288.5ZM868.4,296.3 874.7,294.8 874.7,302.6 870.0,304.1ZM839.5,275.2 843.4,275.2 843.4,279.1 840.3,279.1Z"/>
<rect class="sea" x="833" y="300" width="160" height="102"/>
<path clip-path="url(#c_NG)" class="land" d="M840.8,326.6 848.6,320.3 854.9,315.6 858.0,312.5 861.9,315.6 859.6,323.5 858.0,331.3 856.5,340.7 851.8,343.8 844.0,342.2 842.4,334.4ZM863.5,336.0 870.5,336.0 866.6,340.7 870.5,346.9 867.4,347.7 864.3,342.2ZM831.4,350.1 842.4,351.6 851.8,354.8 861.2,357.1 859.6,358.7 848.6,357.9 837.7,354.0 831.4,353.2ZM864.3,357.9 879.9,356.3 878.4,359.4 865.9,360.2ZM889.3,336.0 895.6,337.5 900.3,339.1 905.0,337.5 911.2,342.2 920.6,348.5 930.0,346.9 934.7,345.4 926.9,351.6 922.2,353.2 926.9,361.0 922.2,361.0 914.3,356.3 908.1,353.2 903.4,353.2 900.3,346.9 895.6,343.8 890.9,340.7ZM869.0,304.7 876.8,306.3 878.4,315.6 872.1,315.6 869.0,311.0ZM848.6,403.3 861.2,392.3 872.1,384.5 876.8,376.7 884.6,373.5 889.3,367.3 898.7,367.3 901.8,373.5 900.3,381.3 905.0,384.5 909.7,381.3 910.4,364.9 914.3,368.8 920.6,382.9 926.9,393.9 930.0,403.3ZM831.4,298.4 837.7,298.4 836.1,303.1 831.4,304.7Z"/>
<rect class="sea" x="560" y="242" width="160" height="102"/>
<path clip-path="url(#c_AFN)" class="land" d="M585.0,240.4 675.8,240.4 680.5,251.4 685.2,263.9 689.8,276.4 694.5,287.4 697.7,293.6 700.8,298.3 708.6,299.9 713.3,298.6 710.2,307.7 705.5,317.1 699.2,326.5 694.5,335.9 693.0,345.3 628.8,345.3 627.3,335.9 627.3,329.6 625.7,320.2 619.4,315.5 611.6,314.0 600.7,315.5 591.3,317.1 586.6,312.4 580.3,304.6 575.6,298.3 570.2,293.6 571.0,287.4 568.6,281.1 569.4,270.2 574.1,257.6 578.8,248.3ZM682.8,240.4 721.1,240.4 721.1,277.2 710.2,281.1 703.9,282.4 700.8,278.0 696.1,268.6 691.4,257.6 686.7,248.3Z"/>
<path clip-path="url(#c_AFN)" class="sea" d="M674.2,335.1 679.7,334.3 680.5,339.8 675.0,340.6ZM708.6,245.1 716.4,248.3 721.1,251.4 721.1,259.2 714.9,256.1 710.2,249.8Z"/>
<rect class="sea" x="600" y="330" width="160" height="102"/>
<path clip-path="url(#c_AFS)" class="land" d="M625.0,328.4 698.6,328.4 692.3,339.4 690.7,353.5 692.3,361.3 690.7,373.8 687.6,381.6 681.3,389.4 679.8,395.7 681.3,400.4 678.2,405.1 673.5,414.5 670.4,420.7 665.7,427.0 662.6,433.3 645.4,433.3 643.8,417.6 640.7,405.1 636.0,392.6 631.3,380.1 632.9,370.7 634.4,361.3 632.9,348.8 628.2,339.4Z"/>
<path clip-path="url(#c_AFS)" class="sea" d="M667.3,334.7 670.4,334.7 671.2,345.6 668.1,345.6ZM674.0,334.4 680.4,334.1 680.7,339.4 674.8,340.3ZM676.7,361.3 679.8,361.3 681.3,376.9 678.2,376.9Z"/>
<path clip-path="url(#c_AFS)" class="land" d="M712.6,370.7 714.2,376.9 709.5,389.4 706.4,398.8 703.3,406.7 700.1,403.5 700.1,389.4 703.3,381.6 709.5,378.5Z"/>
<rect class="sea" x="400" y="270" width="160" height="102"/>
<path clip-path="url(#c_SAN)" class="land" d="M398.4,277.8 409.4,268.4 418.8,268.4 417.2,276.3 414.1,281.0 417.2,287.2 425.0,288.8 426.6,296.6 428.2,302.9 434.4,306.0 439.1,306.8 437.5,310.7 431.3,309.1 425.0,304.4 418.8,296.6 409.4,290.3 404.7,287.2 398.4,285.6ZM439.1,306.3 446.9,301.3 451.6,298.2 459.4,300.5 468.8,302.9 476.7,307.5 481.3,313.8 490.7,315.4 495.4,323.2 498.6,331.0 509.5,335.7 518.9,340.4 525.2,345.1 531.4,351.3 529.8,357.6 525.2,363.9 522.0,373.3 442.2,373.3 437.5,360.7 433.6,351.3 432.9,338.8 436.0,329.4 439.9,316.9Z"/>
<path clip-path="url(#c_SAN)" class="land" d="M436.0,270.0 442.2,270.0 450.1,274.7 457.9,277.0 467.3,278.6 465.7,281.0 453.2,280.2 443.8,276.3Z"/>
<rect class="sea" x="470" y="100" width="120" height="76"/>
<path clip-path="url(#c_GRS)" class="land" d="M468.8,98.8 475.9,98.8 475.3,110.5 468.8,111.1ZM477.0,98.8 562.6,98.8 560.2,109.4 556.7,121.1 552.0,128.1 552.0,130.7 545.0,132.8 535.6,135.2 528.6,138.7 521.6,141.0 519.2,146.9 514.5,155.1 508.7,157.4 502.8,155.1 498.1,149.2 493.4,138.7 491.1,132.8 492.3,129.3 488.8,125.8 484.1,116.4 478.2,111.7ZM553.2,141.0 559.1,139.8 573.1,140.4 576.6,143.4 569.6,146.9 562.6,147.5 557.9,144.5ZM468.8,160.9 472.3,162.1 474.7,170.3 475.9,177.3 468.8,177.3Z"/>
<rect class="sea" x="420" y="500" width="120" height="76"/>
<path clip-path="url(#c_PEN)" class="land" d="M418.8,545.7 427.0,546.9 432.9,544.5 437.6,545.7 443.4,543.4 441.1,537.5 450.5,535.2 455.2,534.0 459.8,528.1 464.5,523.4 469.2,519.9 475.1,517.6 476.2,518.8 473.9,522.3 469.2,527.0 466.9,532.8 472.7,535.2 475.1,538.7 475.1,549.2 476.2,551.6 480.9,553.3 485.6,555.7 490.3,557.4 502.0,558.6 513.8,558.4 540.7,557.7 540.7,577.3 418.8,577.3Z"/>
<path clip-path="url(#c_PEN)" class="sea" d="M442.3,537.5 450.5,536.9 455.2,538.7 461.0,538.7 459.8,543.4 451.6,544.5 444.6,542.2Z"/>
<path clip-path="url(#c_PEN)" class="land" d="M477.4,516.4 483.3,515.2 486.8,515.8 482.1,518.8 478.0,518.8Z"/>
<rect class="sea" x="331" y="80" width="128" height="54"/>
<path clip-path="url(#c_ARC1)" class="land" d="M329.7,130.3 353.6,130.3 361.2,132.8 372.5,130.9 383.8,130.3 401.4,130.3 406.5,132.8 406.5,142.9 403.9,150.4 401.4,163.0 329.7,163.0ZM419.0,132.8 426.6,130.3 434.1,130.3 439.2,132.8 444.2,130.3 460.5,130.3 460.5,163.0 439.2,163.0 434.1,155.5 426.6,150.4 421.6,140.4Z"/>
<path clip-path="url(#c_ARC1)" class="land" d="M338.5,117.7 342.3,115.8 347.3,115.5 348.6,121.5 346.7,127.8 341.1,128.4 337.3,125.3ZM348.6,120.2 356.2,117.7 363.7,121.5 368.7,119.0 375.0,117.7 378.8,121.5 382.6,123.4 386.3,129.3 348.6,129.3ZM388.9,117.7 396.4,116.5 401.4,119.0 401.4,129.3 390.1,129.3ZM406.5,120.2 419.0,117.7 429.1,120.2 434.1,125.3 431.6,129.3 409.0,129.3ZM343.6,110.2 353.6,108.3 363.7,106.4 372.5,108.9 378.8,112.7 373.8,115.2 362.4,114.6 351.1,114.0 343.6,113.3ZM378.8,103.3 387.6,102.6 396.4,103.9 397.7,108.9 391.4,112.7 381.3,112.1ZM398.9,105.2 411.5,104.5 421.6,105.2 431.6,106.4 432.9,111.4 426.6,115.2 416.5,116.5 406.5,115.2 400.2,111.4ZM401.4,96.3 411.5,93.8 421.6,91.9 434.1,91.3 460.5,90.7 460.5,101.4 444.2,102.6 434.1,103.9 421.6,102.6 409.0,101.4 402.7,100.1ZM437.9,103.9 450.5,102.6 460.5,103.9 460.5,108.9 450.5,110.2 439.2,108.9Z"/>
<rect class="sea" x="411" y="80" width="128" height="54"/>
<path clip-path="url(#c_ARC2)" class="land" d="M476.4,91.3 486.5,90.3 506.6,89.1 540.5,88.2 540.5,134.1 526.7,137.9 519.2,139.1 514.1,154.2 507.8,157.3 501.6,150.4 494.0,140.4 491.5,132.8 494.0,129.7 489.0,124.0 486.5,116.5 479.5,111.4 477.7,102.6ZM451.2,102.6 458.8,100.8 467.6,100.1 475.1,101.4 476.4,105.2 473.9,110.2 466.3,111.4 458.8,110.2ZM433.6,92.6 442.4,91.3 451.2,91.3 463.8,90.7 473.9,91.9 471.4,96.3 461.3,97.6 452.5,100.1 442.4,98.9 433.6,97.6ZM409.7,92.6 433.6,92.6 433.6,111.4 426.1,111.4 418.5,116.5 409.7,117.7ZM413.5,119.0 426.1,117.7 432.4,121.5 431.1,129.0 416.0,129.0 412.3,125.3ZM409.7,130.3 431.1,130.3 433.6,136.6 429.9,147.9 418.5,147.9 409.7,145.4ZM439.9,130.3 461.3,130.3 470.1,136.6 471.4,142.9 465.1,150.4 455.0,147.9 446.2,142.9 441.2,136.6Z"/>
<rect class="sea" x="880" y="200" width="40" height="45"/>
<path clip-path="url(#c_JAP)" class="land" d="M879.3,199.3 900.7,199.3 897.3,202.8 893.8,206.2 888.3,207.6 884.1,209.7 882.8,213.8 879.3,215.2ZM879.3,217.3 882.8,219.3 884.1,226.2 882.8,231.1 879.3,231.7ZM910.4,201.4 913.1,203.5 917.3,204.8 918.7,206.2 914.5,208.3 911.7,209.0 908.3,207.6 909.0,205.5ZM907.3,210.4 909.7,212.4 910.4,217.3 909.7,222.8 907.6,226.2 902.8,230.4 897.9,233.8 893.8,233.1 889.0,232.4 891.7,229.7 896.6,228.3 900.7,225.5 904.2,222.1 906.9,220.7 907.3,215.2ZM886.2,234.5 888.3,233.8 889.0,238.7 886.9,241.4 885.9,238.7Z"/>
<rect class="sea" x="219" y="111" width="128" height="82"/>
<path clip-path="url(#c_AK)" class="land" d="M256.7,130.1 260.5,128.0 269.3,126.3 276.9,126.7 287.5,128.0 289.4,130.1 348.5,130.1 348.5,194.0 339.7,194.0 334.7,185.2 328.4,177.0 323.4,170.7 317.1,164.5 309.6,159.4 302.0,157.3 294.5,156.3 284.4,156.0 276.9,156.9 269.3,157.8 262.4,158.5 256.7,157.3 251.7,156.3 250.4,152.5 255.5,149.4 250.4,148.1 247.9,145.0 251.7,142.4 259.2,141.2 255.5,139.3 248.6,136.8 249.2,133.0ZM262.4,158.5 271.8,159.4 279.4,158.8 278.1,161.3 271.8,163.8 265.5,167.0 259.2,170.1 253.6,173.9 252.3,172.6 258.0,168.2 263.0,163.8 260.5,160.7ZM217.7,132.4 224.0,133.6 229.1,136.2 234.1,138.0 239.8,140.6 236.6,142.4 234.1,145.0 229.1,142.4 224.0,141.2 217.7,140.6ZM337.2,118.5 343.5,116.0 348.5,114.8 348.5,124.8 339.7,124.8Z"/>
<path clip-path="url(#c_AK)" class="sea" d="M339.7,139.9 344.8,138.0 348.5,138.7 348.5,143.7 342.9,144.3Z"/>
<rect class="sea" x="610" y="120" width="80" height="51"/>
<path clip-path="url(#c_BAL2)" class="land" d="M642.9,131.0 647.5,130.6 656.2,129.8 690.6,130.6 690.6,171.6 656.9,171.6 654.6,163.8 657.7,161.1 664.8,161.5 664.8,157.5 656.9,157.5 652.2,156.8 652.6,151.3 654.6,147.4 660.1,143.5 660.8,141.1 653.8,141.1 650.7,143.5 647.5,146.6 643.6,153.6 646.8,162.2 644.4,163.8 643.6,171.6 629.6,171.6 630.7,163.8 628.8,160.7 624.9,163.4 619.4,163.0 616.6,157.5 617.8,151.3 624.1,148.9 629.6,145.8 634.2,141.9 639.7,135.6ZM623.3,166.2 628.0,165.4 628.8,171.6 623.3,171.6ZM656.2,127.4 660.1,125.9 664.8,126.3 669.4,127.8 671.8,130.2 656.2,130.2Z"/>
<path clip-path="url(#c_BAL2)" class="sea" d="M678.8,139.6 684.3,138.0 688.2,140.3 685.1,145.8 680.4,145.0ZM671.0,153.6 674.9,152.9 675.7,156.8 671.8,156.8Z"/>
<rect class="sea" x="360" y="230" width="120" height="76"/>
<path clip-path="url(#c_CAM)" class="land" d="M358.8,228.8 440.9,228.8 439.1,235.9 436.2,242.9 435.0,248.8 433.8,255.8 432.7,261.1 430.3,259.9 429.1,254.6 427.4,248.8 425.6,245.8 420.9,244.6 415.1,245.0 409.2,245.8 402.2,246.2 398.7,247.3 395.7,253.4 395.2,261.6 397.5,269.8 401.0,274.5 406.9,278.0 410.4,276.9 409.8,271.6 413.9,269.8 418.6,271.0 418.0,279.2 414.5,282.1 420.9,286.2 426.8,288.6 425.6,293.3 426.8,300.3 425.6,307.3 423.3,307.3 415.1,295.6 406.9,288.6 398.7,285.1 390.5,281.6 383.4,274.5 377.6,265.2 371.7,257.0 367.0,247.6 363.5,244.1 358.8,242.9ZM358.8,245.2 362.3,249.9 365.9,257.0 370.5,265.2 369.4,266.3 364.7,260.5 360.0,253.4 358.8,251.1ZM424.5,267.5 430.3,265.7 436.2,267.5 442.0,271.0 449.1,274.5 452.6,276.9 449.1,277.5 442.0,275.1 435.0,271.0 429.1,269.3ZM447.9,275.7 453.8,274.5 459.6,276.3 465.5,278.0 463.1,280.4 454.9,279.8 449.1,279.2ZM439.7,279.2 443.2,279.0 443.4,280.4 440.3,280.6ZM462.0,278.6 467.2,278.4 467.2,279.8 462.2,279.8ZM440.9,307.3 445.5,300.3 451.4,296.8 459.6,300.3 471.3,299.1 480.7,300.3 480.7,307.3Z"/>
<rect class="sea" x="690" y="230" width="120" height="76"/>
<path clip-path="url(#c_ARB)" class="land" d="M688.8,228.8 810.7,228.8 810.7,307.3 688.8,307.3Z"/>
<path clip-path="url(#c_ARB)" class="sea" d="M707.6,246.4 713.4,247.6 719.3,253.4 725.2,255.2 729.3,257.9 729.8,261.6 727.5,262.8 722.8,259.9 719.3,259.3 717.5,260.7 715.2,257.5 711.7,254.0 708.8,249.9ZM688.8,269.8 692.3,272.2 695.9,281.6 698.8,287.4 697.0,290.4 693.5,288.6 690.0,283.9 688.8,281.6ZM697.0,290.9 701.7,293.3 713.4,288.6 720.5,283.9 727.5,274.5 731.6,267.5 729.3,258.1 734.5,258.7 742.7,258.1 750.9,259.3 753.9,265.2 759.1,268.7 763.8,272.2 762.7,279.2 766.2,288.6 769.7,295.6 772.0,307.3 700.5,307.3 697.0,302.7 695.9,295.6ZM781.4,285.1 787.3,276.9 793.1,272.2 800.2,268.7 804.8,268.7 810.7,265.2 810.7,307.3 776.7,307.3 777.9,295.6 780.2,288.6Z"/>
<rect class="sea" x="420" y="380" width="120" height="76"/>
<path clip-path="url(#c_SAS)" class="land" d="M454.6,378.8 522.0,378.8 519.6,391.7 512.6,399.9 504.4,405.8 502.0,412.8 500.9,416.3 496.2,419.8 490.3,423.4 485.6,426.9 483.3,433.9 484.5,438.6 478.6,445.6 470.4,450.3 466.9,457.3 448.1,457.3 449.3,450.3 451.6,438.6 452.8,426.9 454.0,415.2 455.2,403.4 456.3,391.7Z"/>
</g>
<use href="#landg" style="--land:#fff;--sea:#000" filter="url(#coastf)" opacity="0.6"/>
<path d="M220,100.5H992M220,129.5H992M220,158.5H992M220,187.5H992M220,216.5H992M220,245.5H992M220,274.5H992M220,303.5H992M220,333.5H992M220,362.5H992M220,391.5H992M220,420.5H992M220,449.5H992M220,478.5H992M220,507.5H992M220,536.5H992M220,565.5H992M261.5,72V594M304.5,72V594M347.5,72V594M390.5,72V594M433.5,72V594M476.5,72V594M519.5,72V594M562.5,72V594M605.5,72V594M648.5,72V594M691.5,72V594M734.5,72V594M777.5,72V594M820.5,72V594M863.5,72V594M906.5,72V594M949.5,72V594" stroke="#c8c8c8" stroke-width="1" fill="none"/>
<g mask="url(#lmask)">
<rect x="219" y="71" width="774" height="524" fill="url(#pdots)"/>
<rect x="220" y="581" width="772" height="12" fill="url(#psouth)"/>
<path d="M220,100.5H992M220,129.5H992M220,158.5H992M220,187.5H992M220,216.5H992M220,245.5H992M220,274.5H992M220,303.5H992M220,333.5H992M220,362.5H992M220,391.5H992M220,420.5H992M220,449.5H992M220,478.5H992M220,507.5H992M220,536.5H992M220,565.5H992M261.5,72V594M304.5,72V594M347.5,72V594M390.5,72V594M433.5,72V594M476.5,72V594M519.5,72V594M562.5,72V594M605.5,72V594M648.5,72V594M691.5,72V594M734.5,72V594M777.5,72V594M820.5,72V594M863.5,72V594M906.5,72V594M949.5,72V594" stroke="#b8b8d6" stroke-width="1" fill="none"/>
</g>
<path d="M302.4,130.8 302.4,157.8 306.6,158.7 309.9,161.6 314.2,159.2 318.7,163.3 323.9,170.3 326.0,170.6M340.4,190.6 400.8,190.6 400.8,189.5 402.1,191.5 409.9,193.0 413.1,193.5 416.3,192.7 423.2,196.7 424.7,197.9 426.0,199.3 428.1,201.4 429.0,206.3 426.8,211.0 428.1,211.8 435.6,208.6 435.2,206.6 441.0,205.2 444.9,202.3 451.8,202.3 453.3,201.1 455.0,197.3 456.7,195.3 459.3,195.9 459.7,200.2 461.4,202.5M353.7,238.6 358.9,238.0 366.9,242.1 372.9,242.1 372.9,240.6 376.5,240.6 380.8,247.0 383.8,248.7 385.3,246.4 387.5,246.4 391.6,253.1 396.5,257.7M407.3,290.9 407.3,289.4 408.3,286.2 410.9,286.2 409.0,282.7 413.7,281.3 413.9,281.0 415.7,279.3M413.7,281.3 413.7,286.8 415.9,287.4M411.8,293.2 413.5,291.2 416.7,292.6 417.8,295.2 421.2,292.6 426.6,289.4M421.2,300.8 425.5,301.3M427.3,309.5 427.9,305.4M438.0,312.1 439.3,308.0M451.8,298.1 449.6,301.0 449.8,308.6 452.9,312.7 459.7,315.0 460.4,322.3 459.7,325.7 461.4,329.5M461.4,329.5 463.6,330.1 467.5,322.0 470.5,321.4 474.4,319.9 476.1,317.9 475.0,317.0 473.5,315.9 475.6,312.7 476.5,308.3M476.1,317.9 476.9,319.9 477.6,328.9 479.7,329.2 484.0,327.5 482.5,324.3 481.0,321.4 482.5,315.9M484.0,327.5 487.2,325.7 488.8,326.3 489.4,322.5 489.0,317.3M488.8,326.3 492.6,325.7 494.6,320.8M461.4,329.5 456.3,329.8 456.3,336.5 455.0,345.2M435.9,328.9 439.9,331.8 443.8,333.3 448.8,340.3 455.0,345.2M443.8,333.3 443.0,337.7 438.2,341.7 436.3,346.4 432.9,342.9M455.0,345.2 448.5,347.5 447.5,351.9 448.5,354.8 449.6,360.6 453.9,360.6 453.7,365.0 455.9,365.0M455.9,365.0 458.2,365.3 462.5,361.8 465.1,361.5 467.5,369.3 473.3,372.2 475.6,372.8 476.1,380.4 480.2,380.4 480.2,383.3 481.7,385.9 480.4,390.5M455.9,365.0 457.6,369.6 456.3,377.8 457.1,380.9 455.9,384.1 454.1,386.2M455.9,384.1 457.8,389.4 458.9,395.5 461.2,399.3M480.4,390.5 472.8,391.1 471.6,396.3 467.3,399.3 464.0,396.9 461.2,399.3M480.4,390.5 481.2,397.2 485.5,397.8 487.0,402.7 488.8,404.5M471.6,396.3 476.5,402.7 480.8,407.1 481.4,412.3 485.3,412.9 488.1,407.4M488.1,407.4 490.0,409.1 489.8,411.7 485.1,415.8 481.7,420.8M481.7,420.8 486.2,422.8 490.7,430.9M481.7,420.8 480.4,428.9 479.9,431.8M461.2,399.3 458.7,404.2 458.0,411.5 455.6,420.2 455.0,428.9 453.9,436.2 452.9,442.0 452.4,449.2 451.3,455.0 451.6,460.9 451.1,466.7 450.1,471.0 448.1,476.8 449.8,482.6 457.1,484.7 458.0,485.8 458.0,492.5M630.0,161.6 632.4,155.8 631.7,148.5 635.6,144.1 639.9,135.4 645.3,134.0 649.6,132.5M657.3,141.8 656.0,136.9 649.6,132.5 659.2,133.7 666.8,132.5 670.0,130.5M666.8,132.5 668.9,138.3 670.0,147.0 673.2,150.5 665.3,157.2M665.7,160.1 664.6,165.9 666.1,170.0 673.2,171.7 673.9,181.6 680.8,181.3 687.2,187.7 691.5,188.9 690.9,194.1 687.6,196.2M657.7,164.8 664.6,165.9M650.6,170.0 662.7,171.2 656.0,176.4 654.5,174.9 650.6,172.3M656.0,176.4 656.5,180.2 656.2,183.4 657.1,186.6 654.1,190.3M656.2,183.4 664.6,183.1 673.9,181.6M636.0,176.4 636.9,180.2 637.8,184.5 641.0,186.9 645.9,189.2 654.1,190.3M637.8,184.5 631.7,186.9 635.2,191.5 633.5,194.7 628.1,195.0 626.1,195.0 621.8,194.7M621.8,194.7 623.1,190.6 619.3,189.2 618.4,185.4 620.3,181.3 621.0,178.4M624.0,173.5 626.8,173.8M610.9,184.5 614.5,187.7 618.0,189.2 623.1,190.6M621.8,194.7 618.6,198.5 620.5,199.6 619.7,202.3 621.6,205.7M601.6,206.9 607.0,208.6 612.4,209.8M586.4,211.3 591.5,211.3 590.5,218.2 589.6,224.9M620.5,199.6 624.8,199.3 628.1,197.9 631.7,196.4 635.0,197.9M635.2,191.5 637.8,190.6 641.8,191.8 645.9,189.2M641.8,191.8 642.0,193.5 641.0,197.9 635.0,197.9M642.0,193.5 645.9,194.1 649.6,192.1 653.2,192.4 651.3,197.6 649.1,199.1 645.9,199.6 643.1,199.6 641.0,197.9M654.1,190.3 653.2,192.4 659.0,194.4 662.7,193.0 666.1,197.9 666.1,200.8 669.4,201.7M649.1,199.1 651.5,202.3 654.3,203.7 659.2,206.0 666.8,206.0M653.7,210.1 658.2,212.4 661.6,211.5 665.7,211.0M662.0,211.8 661.6,214.5M648.5,217.7 650.6,214.5 653.7,213.6 653.7,210.1 655.0,205.7 654.3,203.7M639.3,201.7 646.3,202.3 647.2,208.1 645.3,209.5M647.2,209.2 649.6,211.0 648.5,217.7M601.8,231.0 601.6,239.2 597.5,241.2 594.3,245.8 586.8,249.6 586.8,252.5 577.1,252.5M586.8,252.5 586.8,257.5 579.7,257.5 579.7,265.0 577.5,271.1 569.0,271.1M586.8,253.7 595.2,260.4 592.6,271.1 593.5,285.1 594.1,288.0 581.0,288.3 579.3,290.3 570.0,285.9M595.2,260.4 608.1,272.0 614.7,277.2 618.0,276.3 631.3,264.7 625.9,256.0 627.4,245.3 625.9,245.0 623.3,238.6 623.1,231.3 623.8,225.8M627.4,245.3 630.2,236.8M659.2,241.2 659.2,269.1 685.0,269.1M659.2,269.1 659.2,274.9 657.1,274.9 657.1,276.3 637.8,264.7 631.3,264.7M637.8,264.7 638.8,273.4 639.3,275.2 634.7,293.8M657.1,276.3 657.1,287.4 653.9,292.3 652.8,296.7 654.7,300.5 656.0,306.9M652.8,301.6 646.3,306.9 638.8,311.2 637.8,303.9 635.6,295.2M613.2,299.0 614.1,293.8 620.5,295.2 627.0,294.1 632.4,293.8 634.7,293.8M614.7,277.2 614.7,285.9 613.0,288.0 607.6,289.4 605.9,289.7 607.6,294.4 610.7,297.6 613.2,299.0M581.0,288.3 581.0,297.0 587.2,301.0 593.9,302.8 595.8,296.1 601.2,290.9 605.9,289.7M593.9,302.8 599.5,301.0 605.5,301.0 610.7,297.6M599.5,301.0 599.5,305.4 598.8,318.2M605.5,301.0 606.6,309.8 608.1,315.3M607.4,301.0 608.9,306.9 609.4,314.7M613.2,299.0 611.3,306.9 611.3,314.4M587.2,301.0 587.9,308.3 589.4,311.2 589.4,320.2M579.3,290.3 581.0,297.0 576.0,296.4 569.6,297.0M583.4,303.9 582.7,306.9 580.8,313.0M634.7,293.8 636.7,299.6 634.5,303.9 631.3,311.2 627.0,314.1 623.8,319.6M638.8,311.2 636.7,318.5 640.3,326.6 634.1,326.6 629.8,326.6 626.6,326.6M634.1,326.6 633.5,335.9 636.7,340.3 630.2,340.3 629.4,344.3M640.3,326.6 645.3,322.8 645.5,320.2 649.6,320.5 654.7,319.3 659.2,318.5 664.4,317.9 666.3,320.5 671.7,322.8M645.3,322.8 643.1,335.9 639.9,343.2 638.2,345.5 631.7,349.9M656.0,306.9 657.1,307.7 659.9,310.6 664.4,317.9M657.1,307.7 662.5,305.4 665.3,305.1 670.0,303.4 675.4,297.6 677.5,303.9 679.0,302.5M679.0,302.5 681.4,296.7 684.0,291.5 685.0,283.6 688.3,280.7M679.0,302.5 679.0,308.3 676.5,310.0 681.4,318.5M671.7,322.8 677.5,322.0 681.4,318.5M684.0,291.5 691.5,290.9 696.7,296.7M698.2,300.2 700.1,306.9 708.3,309.8 702.2,318.5 695.8,320.8 689.3,322.8 681.4,318.5M695.8,320.8 693.6,324.9 693.6,337.9M678.6,335.9 686.1,341.7 689.8,346.7M681.4,318.5 679.7,328.6 678.6,335.9M671.7,322.8 669.4,330.1 669.1,337.1 671.1,336.2 678.6,335.9M669.1,337.1 667.8,341.1 671.1,343.2 671.1,357.1M631.7,349.9 641.0,350.4 643.1,356.2 647.4,353.3 652.4,354.2 652.8,365.0 657.1,365.0M657.1,365.0 659.2,365.5 661.4,367.6 665.7,367.9 668.9,368.7 667.6,357.4 671.1,357.1 676.5,360.6 679.9,366.4 687.2,365.5 692.4,363.5M657.1,365.0 652.8,370.8 652.8,379.5 655.8,384.1M630.9,383.3 635.6,383.6 650.6,385.3 655.8,384.1 659.9,384.7 665.7,380.9 670.6,378.3 676.5,373.7 675.8,372.2 678.2,362.1M670.6,378.3 676.2,381.5 676.5,388.2 675.2,394.9 672.8,398.1M650.6,385.3 650.6,396.9 648.5,396.9 648.5,405.1 648.5,415.5 641.0,416.1M648.5,405.1 655.0,406.5 660.5,407.7 663.5,401.6 668.7,397.2 672.8,398.1 674.3,407.1 676.2,411.2M659.9,384.7 661.4,386.8 665.3,392.6 668.7,397.2M679.0,242.1 680.5,247.3M680.8,247.6 685.0,244.4 687.2,241.5 689.8,239.4 695.8,242.9 701.6,248.2 705.5,248.5 708.1,250.2M682.5,238.0 688.9,236.0 689.8,239.4M682.9,228.7 684.4,226.1 696.7,225.2 694.1,232.8 688.9,236.0M705.5,248.5 708.7,245.8M701.8,217.7 700.7,224.9 703.3,229.3 704.4,237.1 708.3,240.6 709.8,245.8M694.7,212.4 699.0,213.6 701.8,217.7 705.5,220.0 708.7,219.7 710.0,221.4M697.5,285.1 701.2,282.7 706.5,283.9 710.8,279.0 717.3,277.8 724.8,274.9 723.8,267.0 717.3,263.3 716.2,261.5M717.3,277.8 719.7,284.8M737.1,226.7 735.6,233.6 736.2,235.7 735.8,241.5 738.2,241.8 740.5,247.6 737.7,253.1 738.2,259.8M740.5,247.6 748.3,246.1 754.5,240.3 757.1,234.5 758.1,228.4 765.7,225.5M737.1,226.7 744.2,225.2 751.3,224.9 759.2,222.9 766.5,224.3M721.6,224.6 728.7,222.0 735.1,226.7 737.1,226.7M691.5,206.9 695.8,207.5 700.1,208.9 705.5,211.5 709.8,211.5M706.5,193.5 705.5,190.6 708.7,186.3 715.1,183.4 723.8,186.0 731.3,184.8 734.5,185.4 737.7,183.4 735.6,181.0 736.6,177.3 738.8,176.1 745.2,174.4 753.8,172.3 762.5,176.1 764.6,177.3 770.0,176.1 773.0,178.1 777.5,185.4 785.0,184.8 789.3,189.2 793.2,190.3 794.3,190.0M793.2,190.3 790.4,192.1 789.3,196.4 783.9,195.9 782.9,200.8 777.5,202.3 778.1,208.1 777.9,210.4 771.0,208.4 764.6,207.5 758.1,210.1 752.8,214.7 747.4,208.1 744.2,206.0 736.6,204.0 731.3,200.8 725.9,202.3 725.9,213.0M731.3,208.9 736.6,213.3 743.1,218.5 748.5,224.3M777.9,210.4 773.2,213.6 768.9,215.6 764.6,217.4 763.7,218.5 766.5,224.3M766.5,224.3 772.8,229.9 776.4,238.6 774.7,241.5 779.6,245.3 785.0,248.7 794.7,251.9 796.6,253.7 802.7,252.2 803.5,254.8 811.9,247.6 814.7,251.1 814.7,254.0 817.7,255.7 815.6,263.3 818.4,268.8 823.1,270.8 824.8,267.9 831.9,265.3 835.1,266.8 837.7,270.5M765.7,225.5 766.8,232.8 764.6,237.1 766.1,238.6 765.9,242.9 763.3,246.1 760.7,250.8 757.1,252.2 754.9,256.0 757.3,258.3 758.1,262.1 753.4,262.4M777.5,249.3 784.6,253.7 794.7,256.3M794.7,256.3 796.4,259.8 795.1,261.8 796.9,269.1 803.3,270.5 804.8,269.1 804.2,260.7 801.6,259.8 798.6,257.7 794.7,256.3M814.7,254.0 809.8,257.5 808.9,261.2 806.5,267.6 804.8,269.1M823.1,270.8 820.5,273.7 817.7,275.8 816.6,280.7 815.3,285.1 817.3,292.3 818.8,301.9 817.9,303.4M820.5,273.7 822.9,276.6 823.3,281.3 825.9,281.0 830.8,285.1 832.5,290.3M824.8,267.9 829.1,272.9 830.4,279.3 834.5,283.6 836.6,289.4 836.6,291.2M825.9,298.1 826.9,291.5 832.5,290.3 836.6,291.2 833.4,301.0 830.2,302.8M820.5,314.1 823.7,316.2 825.0,315.0M794.3,190.0 800.1,194.4 801.1,200.8 806.5,202.3 811.9,208.9 820.5,209.2 831.2,212.1 839.9,209.5 846.3,206.3 846.3,202.0 851.7,201.1 856.2,197.6 862.9,197.3 862.0,194.7 858.1,194.4 854.5,194.4 856.4,188.3M794.3,190.0 799.0,186.6 803.3,185.7 808.2,186.0 816.2,182.2 817.7,187.7 825.9,187.1 833.2,186.6 837.7,189.8 843.7,190.3 850.6,186.9 856.4,188.3M856.4,188.3 858.8,188.9 863.1,186.9 866.7,178.1 875.3,179.0 879.6,187.7 886.5,190.9 891.9,193.0 895.8,192.1 894.7,194.7 891.4,201.4 887.8,202.5 887.1,208.6 886.3,209.8M886.3,209.8 882.9,211.0 878.3,211.5 872.7,216.8M873.8,222.6 877.9,222.9 881.3,220.8M841.1,328.1 845.2,329.8 850.6,329.2 854.5,322.8 858.1,320.8" stroke="#747486" stroke-width="1" fill="none"/>
<rect x="220" y="72" width="772" height="13" fill="url(#pP)"/><rect x="220" y="86" width="772" height="44" fill="url(#p1)"/><rect x="220" y="131" width="772" height="115" fill="url(#p2)"/><rect x="220" y="247" width="772" height="38" fill="url(#p1)"/><rect x="220" y="286" width="772" height="94" fill="url(#pP)"/><rect x="220" y="381" width="772" height="38" fill="url(#p1)"/><rect x="220" y="420" width="772" height="115" fill="url(#p2)"/><rect x="220" y="536" width="772" height="44" fill="url(#p1)"/><rect x="220" y="581" width="772" height="13" fill="url(#pP)"/>
<path d="M220,85.5H992M220,130.5H992M220,246.5H992M220,285.5H992M220,380.5H992M220,419.5H992M220,535.5H992M220,580.5H992" stroke="#ff0000" stroke-width="1" fill="none"/>
<rect x="219.5" y="71.5" width="773" height="523" fill="none" stroke="#000" stroke-width="1"/>
</svg>
</body></html>
